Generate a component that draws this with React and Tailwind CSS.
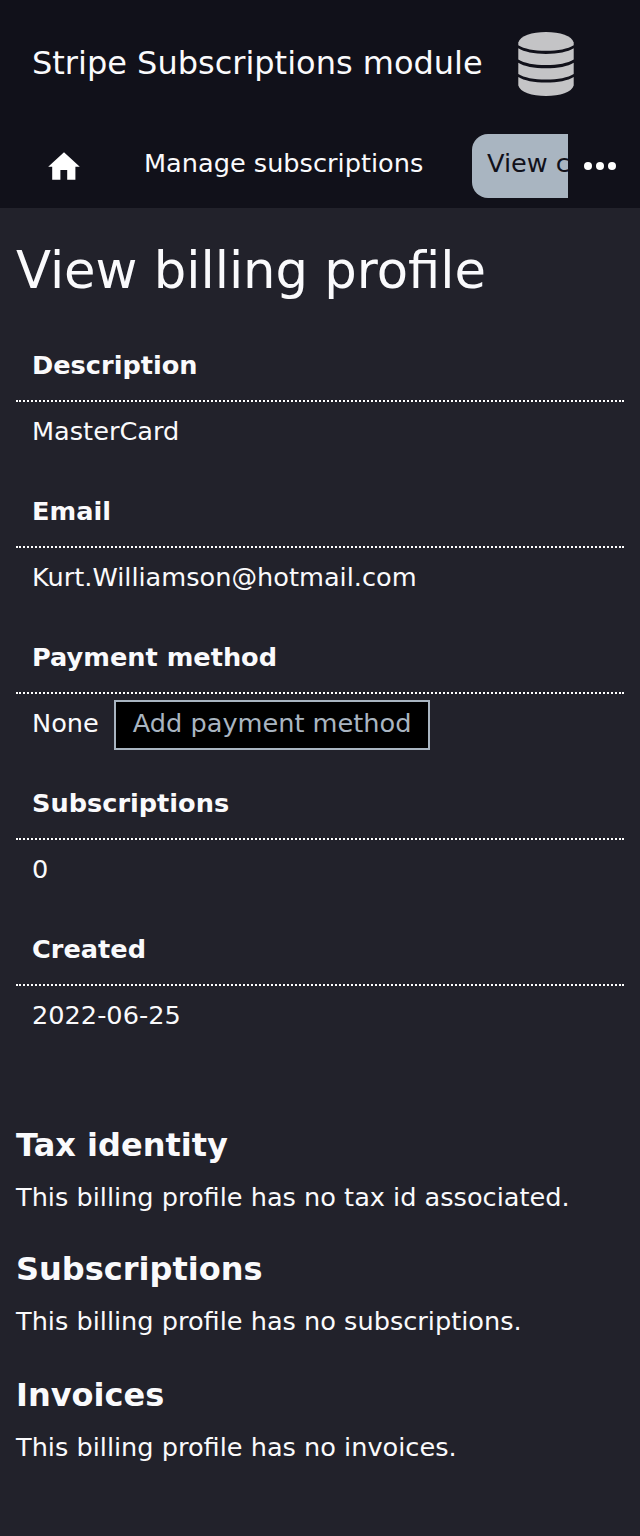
const rows = [
  ['Description', 'MasterCard'],
  ['Email', 'Kurt.Williamson@hotmail.com'],
  ['Payment method', 'None'],
  ['Subscriptions', '0'],
  ['Created', '2022-06-25'],
];

function Database() {
  return (
    <svg className="block h-16 w-14" viewBox="0 0 56 64" fill="#c4c4c6">
      <path d="M0.3 10.5C2 4 14 0 28 0S54 4 55.7 10.5V13.2C50 16.8 40 18.8 28 18.8S6 16.8 0.3 13.2Z" />
      <path d="M0.3 16.3C6 19.9 16 21.9 28 21.9S50 19.9 55.7 16.3V27.5C50 31.1 40 33.1 28 33.1S6 31.1 0.3 27.5Z" />
      <path d="M0.3 30.7C6 34.3 16 36.3 28 36.3S50 34.3 55.7 30.7V41.9C50 45.5 40 47.5 28 47.5S6 45.5 0.3 41.9Z" />
      <path d="M0.3 45C6 48.6 16 50.6 28 50.6S50 48.6 55.7 45V53.5C54 60 42 64 28 64S2 60 0.3 53.5Z" />
    </svg>
  );
}

export default function App() {
  return (
    <div className="h-[1536px] w-[640px] overflow-hidden bg-[#22222b] font-['DejaVu_Sans',sans-serif] text-[25.6px] leading-[38px] text-[#fafafc]">
      <header className="h-52 bg-[#11111a]">
        <div className="flex h-32 items-center pl-8 text-[32px]">
          <span className="w-[486px] pb-0.5 whitespace-nowrap">Stripe Subscriptions module</span>
          <Database />
        </div>
        <nav className="flex h-20 pt-1.5">
          <div className="flex w-[568px] overflow-hidden whitespace-nowrap">
            <div className="w-32 shrink-0 pt-4 pl-12">
              <svg className="block h-8 w-8" viewBox="0 0 32 32" fill="#fff"><path d="M16 2.2 0.2 16.8h4V29.7h8.2V20H19.2v9.7h8.2V16.8h4.4z" /></svg>
            </div>
            <span className="w-[344px] shrink-0 pt-2.5 pl-4">Manage subscriptions</span>
            <span className="h-16 shrink-0 rounded-2xl bg-[#a9b5c1] px-[15px] pt-2.5 text-[#11111a]">View customer</span>
          </div>
          <svg className="mt-4 ml-4 block h-8 w-8" viewBox="0 0 32 32" fill="#fff"><circle cx="4" cy="16" r="4" /><circle cx="16" cy="16" r="4" /><circle cx="28" cy="16" r="4" /></svg>
        </nav>
      </header>
      <main className="px-4">
        <h1 className="h-[127px] pt-[26px] text-[51.2px] leading-[72px]">View billing profile</h1>
        <dl>
          {rows.map(([label, value]) => (
            <div key={label} className="h-[146px]">
              <dt className="h-[67px] border-b-2 border-dotted border-white pt-[11px] pl-4 font-bold">{label}</dt>
              <dd className="flex pt-[6px] pl-4">
                <span className="pt-1">{value}</span>
                {label === 'Payment method' && (
                  <button className="ml-[15px] h-[50px] border-2 border-[#a9b5c1] bg-black px-[17px] pb-[5px] text-[#a9b5c1]">Add payment method</button>
                )}
              </dd>
            </div>
          ))}
        </dl>
        <h2 className="pt-[60px] text-[32px] leading-[40px] font-bold">Tax identity</h2>
        <p className="pt-[13px]">This billing profile has no tax id associated.</p>
        <h2 className="pt-[33px] text-[32px] leading-[40px] font-bold">Subscriptions</h2>
        <p className="pt-[13px]">This billing profile has no subscriptions.</p>
        <h2 className="pt-[35px] text-[32px] leading-[40px] font-bold">Invoices</h2>
        <p className="pt-[13px]">This billing profile has no invoices.</p>
      </main>
    </div>
  );
}
